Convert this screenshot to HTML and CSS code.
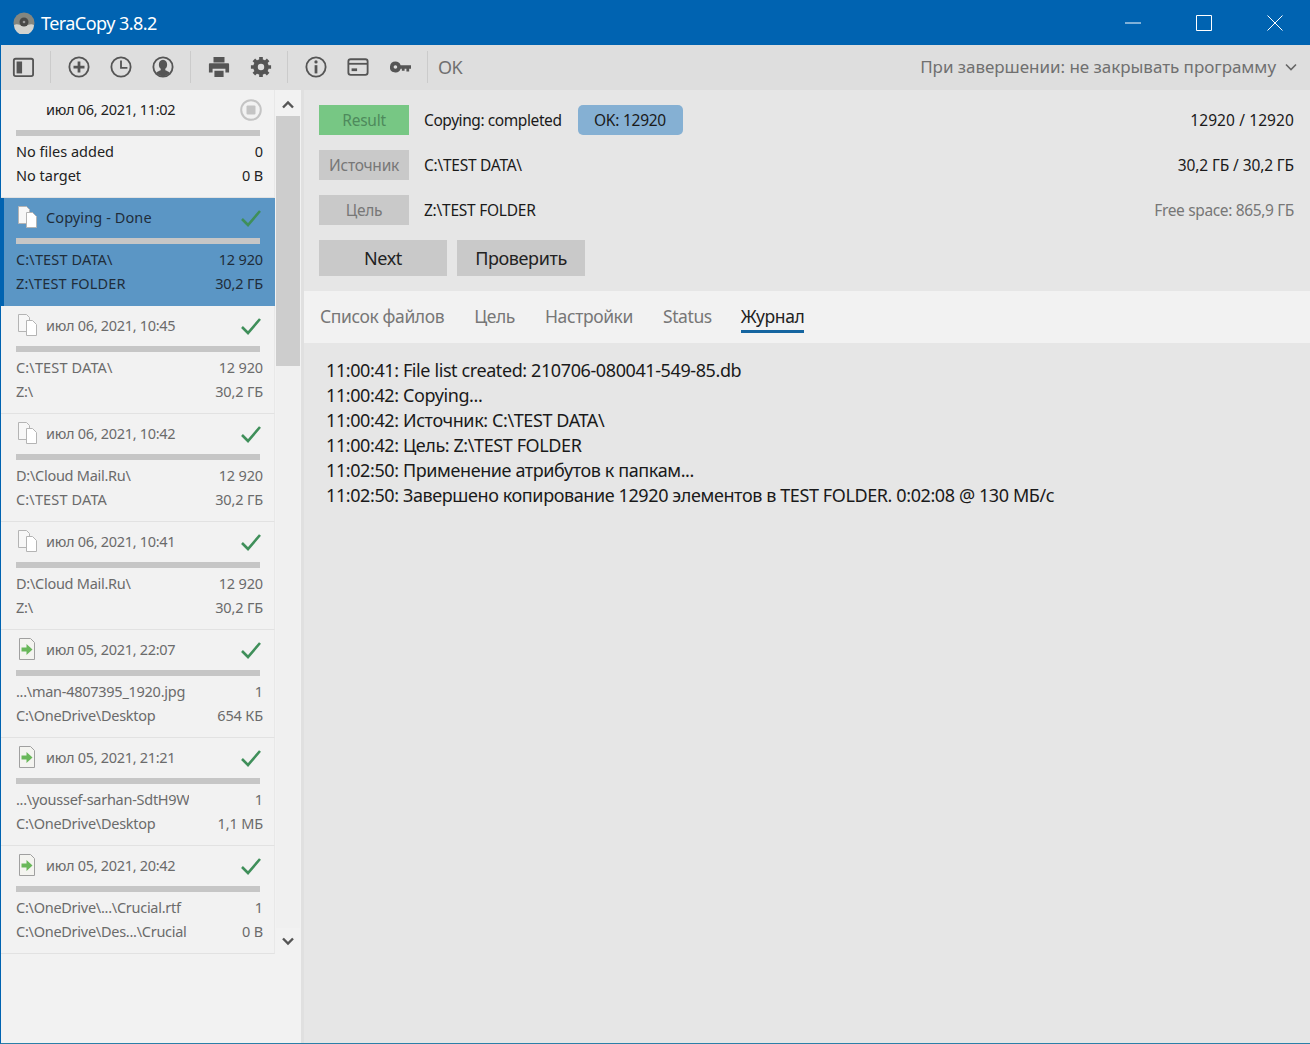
FILE: index.html
```html
<!DOCTYPE html>
<html lang="en">
<head>
  <meta charset="UTF-8">
  <title>TeraCopy 3.8.2</title>
  <link rel="stylesheet" href="styles.css">
</head>
<body>
  <svg class="defs" width="0" height="0">
    <symbol id="check" viewBox="0 0 22 20"><path d="M2 11l6 6L20 3" fill="none" stroke="#3f8f5a" stroke-width="2.6"/></symbol>
    <symbol id="files" viewBox="0 0 22 24"><path d="M2.500 1.500h8l3 3v14h-11z" fill="#f7f7f7" stroke="#b4b4b4"/><path d="M10.500 7.500h6l4 4v11h-10z" fill="#fff" stroke="#b4b4b4"/></symbol>
    <symbol id="file" viewBox="0 0 22 24"><path d="M3.500 1.500h11l4 4v17h-15z" fill="#f4f4f0" stroke="#a0a0a0"/><path d="M5.500 10.500h5V7l6 5.500-6 5.500v-3.500h-5z" fill="#69b85a"/></symbol>
  </svg>
  <div class="window">
    <header class="titlebar">
      <svg class="logo" width="22" height="22" viewBox="0 0 22 22"><circle cx="11" cy="11" r="10.500" fill="#84867f"/><path d="M1 13a10 10 0 0 0 20 0c-4-2-6 1-10 1s-6-3-10-1z" fill="#d2d3cf"/><circle cx="11" cy="10" r="4.500" fill="#4a4a48"/><circle cx="11" cy="10" r="1.300" fill="#999"/></svg>
      <span class="title">TeraCopy 3.8.2</span>
      <div class="winbtns">
        <svg width="16" height="16" viewBox="0 0 16 16"><path d="M0 8h16" stroke="#fff"/></svg>
        <svg width="16" height="16" viewBox="0 0 16 16"><path d="M.5.500h15v15H.5z" fill="none" stroke="#fff"/></svg>
        <svg width="16" height="16" viewBox="0 0 16 16"><path d="M.5.500l15 15M15.500.500l-15 15" stroke="#fff"/></svg>
      </div>
    </header>

    <div class="toolbar">
      <div class="toolgroup first">
        <svg class="ico" viewBox="0 0 24 24"><rect x="2" y="3" width="21" height="19" rx="2" fill="none" stroke="#555" stroke-width="2"/><rect x="5" y="6" width="6" height="13" fill="#555"/></svg>
      </div>
      <div class="toolgroup">
        <svg class="ico" viewBox="0 0 24 24"><circle cx="12" cy="12" r="10.500" fill="none" stroke="#555" stroke-width="2"/><path d="M12 6v12M6 12h12" stroke="#555" stroke-width="3"/></svg>
        <svg class="ico" viewBox="0 0 24 24"><circle cx="12" cy="12" r="10.500" fill="none" stroke="#555" stroke-width="2"/><path d="M12 5v8h7" fill="none" stroke="#555" stroke-width="2"/></svg>
        <svg class="ico" viewBox="0 0 24 24"><circle cx="12" cy="12" r="10.500" fill="none" stroke="#555" stroke-width="2"/><path d="M12 4c3 0 4.500 2.500 4.500 5.500 0 2-.8 3.500-2 4.500v1.500c2 .8 4 1.500 5 3a10 10 0 0 1-15 0c1-1.500 3-2.200 5-3V14c-1.200-1-2-2.500-2-4.500C7.500 6.500 9 4 12 4z" fill="#555"/></svg>
      </div>
      <div class="toolgroup narrow">
        <svg class="ico" viewBox="0 0 24 24"><path d="M6 1h12v6H6zM2 8h20a1 1 0 0 1 1 1v9h-4v-4H5v4H1V9a1 1 0 0 1 1-1zM7 16h10v7H7z" fill="#555"/></svg>
        <svg class="ico" viewBox="0 0 24 24"><path d="M12 3.500a8.500 8.500 0 1 0 0 17 8.500 8.500 0 0 0 0-17zm0 5a3.500 3.500 0 1 1 0 7 3.500 3.500 0 0 1 0-7z" fill="#555"/><path d="M12 1v5M12 18v5M1 12h5M18 12h5M4.200 4.200l3.500 3.500M16.300 16.300l3.500 3.500M19.800 4.200l-3.500 3.500M7.700 16.300l-3.500 3.500" stroke="#555" stroke-width="4"/></svg>
      </div>
      <div class="toolgroup">
        <svg class="ico" viewBox="0 0 24 24"><circle cx="12" cy="12" r="10.500" fill="none" stroke="#555" stroke-width="2"/><path d="M12 10v9" stroke="#555" stroke-width="3"/><circle cx="12" cy="6.500" r="1.800" fill="#555"/></svg>
        <svg class="ico" viewBox="0 0 24 24"><rect x="1.500" y="3.500" width="21" height="17" rx="2.500" fill="none" stroke="#555" stroke-width="2"/><path d="M2 8.500h20" stroke="#555" stroke-width="2"/><path d="M5 13.500h6v3H5z" fill="#555"/></svg>
        <svg class="ico" viewBox="0 0 24 24"><path d="M7 6a6 6 0 0 1 5.700 4H24v4h-2v3h-3v-3h-2v2h-3v-2h-1.300A6 6 0 1 1 7 6zm0 4a2 2 0 1 0 0 4 2 2 0 0 0 0-4z" fill="#555"/></svg>
      </div>
      <span class="ok-label">OK</span>
      <div class="finish">
        <span>При завершении: не закрывать программу</span>
        <svg width="12" height="8" viewBox="0 0 12 8"><path d="M1 1.500l5 5 5-5" fill="none" stroke="#666" stroke-width="1.600"/></svg>
      </div>
    </div>

    <div class="main">
      <aside class="sidebar">
        <div class="list">
          <div class="card">
            <div class="card-head">
              <span class="blank-icon"></span>
              <span class="date dark">июл 06, 2021, 11:02</span>
              <svg class="stop" width="22" height="22" viewBox="0 0 22 22"><circle cx="11" cy="11" r="9.800" fill="none" stroke="#c4c4c4" stroke-width="2"/><rect x="6.500" y="6.500" width="9" height="9" rx="1" fill="#c4c4c4"/></svg>
            </div>
            <div class="bar"></div>
            <div class="row dark"><span class="path">No files added</span><span>0</span></div>
            <div class="row dark"><span class="path">No target</span><span>0 B</span></div>
          </div>
          <div class="card active">
            <div class="card-head">
              <svg class="file-icon" viewBox="0 0 22 24"><use href="#files"/></svg>
              <span class="date">Copying - Done</span>
              <svg class="check" viewBox="0 0 22 20"><use href="#check"/></svg>
            </div>
            <div class="bar"></div>
            <div class="row"><span class="path caps">C:\TEST DATA\</span><span>12 920</span></div>
            <div class="row"><span class="path caps">Z:\TEST FOLDER</span><span>30,2 ГБ</span></div>
          </div>
          <div class="card">
            <div class="card-head">
              <svg class="file-icon" viewBox="0 0 22 24"><use href="#files"/></svg>
              <span class="date">июл 06, 2021, 10:45</span>
              <svg class="check" viewBox="0 0 22 20"><use href="#check"/></svg>
            </div>
            <div class="bar"></div>
            <div class="row"><span class="path caps">C:\TEST DATA\</span><span>12 920</span></div>
            <div class="row"><span class="path">Z:\</span><span>30,2 ГБ</span></div>
          </div>
          <div class="card">
            <div class="card-head">
              <svg class="file-icon" viewBox="0 0 22 24"><use href="#files"/></svg>
              <span class="date">июл 06, 2021, 10:42</span>
              <svg class="check" viewBox="0 0 22 20"><use href="#check"/></svg>
            </div>
            <div class="bar"></div>
            <div class="row"><span class="path">D:\Cloud Mail.Ru\</span><span>12 920</span></div>
            <div class="row"><span class="path caps">C:\TEST DATA</span><span>30,2 ГБ</span></div>
          </div>
          <div class="card">
            <div class="card-head">
              <svg class="file-icon" viewBox="0 0 22 24"><use href="#files"/></svg>
              <span class="date">июл 06, 2021, 10:41</span>
              <svg class="check" viewBox="0 0 22 20"><use href="#check"/></svg>
            </div>
            <div class="bar"></div>
            <div class="row"><span class="path">D:\Cloud Mail.Ru\</span><span>12 920</span></div>
            <div class="row"><span class="path">Z:\</span><span>30,2 ГБ</span></div>
          </div>
          <div class="card">
            <div class="card-head">
              <svg class="file-icon" viewBox="0 0 22 24"><use href="#file"/></svg>
              <span class="date">июл 05, 2021, 22:07</span>
              <svg class="check" viewBox="0 0 22 20"><use href="#check"/></svg>
            </div>
            <div class="bar"></div>
            <div class="row"><span class="path">...\man-4807395_1920.jpg</span><span>1</span></div>
            <div class="row"><span class="path">C:\OneDrive\Desktop</span><span>654 КБ</span></div>
          </div>
          <div class="card">
            <div class="card-head">
              <svg class="file-icon" viewBox="0 0 22 24"><use href="#file"/></svg>
              <span class="date">июл 05, 2021, 21:21</span>
              <svg class="check" viewBox="0 0 22 20"><use href="#check"/></svg>
            </div>
            <div class="bar"></div>
            <div class="row"><span class="path clip">...\youssef-sarhan-SdtH9W</span><span>1</span></div>
            <div class="row"><span class="path">C:\OneDrive\Desktop</span><span>1,1 МБ</span></div>
          </div>
          <div class="card">
            <div class="card-head">
              <svg class="file-icon" viewBox="0 0 22 24"><use href="#file"/></svg>
              <span class="date">июл 05, 2021, 20:42</span>
              <svg class="check" viewBox="0 0 22 20"><use href="#check"/></svg>
            </div>
            <div class="bar"></div>
            <div class="row"><span class="path">C:\OneDrive\...\Crucial.rtf</span><span>1</span></div>
            <div class="row"><span class="path">C:\OneDrive\Des...\Crucial</span><span>0 B</span></div>
          </div>
        </div>
        <div class="scrollbar">
          <svg width="14" height="10" viewBox="0 0 14 10"><path d="M2 7.500l5-5 5 5" fill="none" stroke="#555" stroke-width="2.400"/></svg>
          <div class="thumb"></div>
          <div class="track"></div>
          <svg width="14" height="10" viewBox="0 0 14 10"><path d="M2 2.500l5 5 5-5" fill="none" stroke="#555" stroke-width="2.400"/></svg>
        </div>
      </aside>

      <main class="content">
        <section class="summary">
          <div class="info">
            <span class="tag green">Result</span>
            <span class="val status">Copying: completed</span>
            <span class="pill">OK: 12920</span>
            <span class="right">12920 / 12920</span>
          </div>
          <div class="info">
            <span class="tag">Источник</span>
            <span class="val">C:\TEST DATA\</span>
            <span class="right size">30,2 ГБ / 30,2 ГБ</span>
          </div>
          <div class="info">
            <span class="tag">Цель</span>
            <span class="val">Z:\TEST FOLDER</span>
            <span class="right muted">Free space: 865,9 ГБ</span>
          </div>
          <div class="actions">
            <button class="btn">Next</button>
            <button class="btn">Проверить</button>
          </div>
        </section>
        <nav class="tabs">
          <span class="tab">Список файлов</span>
          <span class="tab">Цель</span>
          <span class="tab">Настройки</span>
          <span class="tab">Status</span>
          <span class="tab current">Журнал</span>
        </nav>
        <div class="log">
          <div>11:00:41: File list created: 210706-080041-549-85.db</div>
          <div>11:00:42: Copying...</div>
          <div>11:00:42: Источник: C:\TEST DATA\</div>
          <div>11:00:42: Цель: Z:\TEST FOLDER</div>
          <div>11:02:50: Применение атрибутов к папкам...</div>
          <div>11:02:50: Завершено копирование 12920 элементов в TEST FOLDER. 0:02:08 @ 130 МБ/с</div>
        </div>
      </main>
    </div>
  </div>
</body>
</html>
```

FILE: styles.css
```css
* {
  box-sizing: border-box;
}

body {
  margin: 0;
  font-family: "Noto Sans", sans-serif;
  background: #e6e6e6;
  overflow: hidden;
}

.defs {
  position: absolute;
}

.window {
  height: 1044px;
  display: flex;
  flex-direction: column;
  border-left: 1px solid #0063b1;
  border-bottom: 1px solid #2a7fa8;
}

.titlebar {
  height: 45px;
  margin-left: -1px;
  background: #0063b1;
  color: #fff;
  display: flex;
  align-items: center;
  padding-left: 13px;
  flex-shrink: 0;
}

.logo {
  margin-right: 6px;
}

.title {
  font-size: 18px;
  letter-spacing: -0.55px;
}

.winbtns {
  margin-left: auto;
  display: flex;
  gap: 55px;
  padding-right: 27px;
}

.toolbar {
  height: 45px;
  padding-bottom: 1px;
  background: #dedede;
  display: flex;
  align-items: center;
  flex-shrink: 0;
  color: #707070;
}

.toolgroup {
  display: flex;
  align-items: center;
  gap: 20px;
  height: 32px;
  padding: 0 16px 0 17px;
  border-right: 1px solid #cbcbcb;
}

.toolgroup.first {
  padding: 0 16px 0 11px;
}

.toolgroup.narrow {
  padding-right: 15px;
}

.ico {
  width: 22px;
  height: 22px;
}

.ok-label {
  margin-left: 10px;
  font-size: 18px;
  letter-spacing: -0.6px;
}

.finish {
  margin-left: auto;
  display: flex;
  align-items: center;
  gap: 9px;
  padding: 0 13px 1px 0;
  font-size: 17px;
  letter-spacing: -0.04px;
}

.main {
  flex: 1;
  display: flex;
  min-height: 0;
}

.sidebar {
  width: 300px;
  background: #f2f2f2;
  display: flex;
  flex-shrink: 0;
}

.list {
  width: 274px;
}

.card {
  height: 108px;
  padding: 0 11px 0 15px;
  border-bottom: 1px solid #e2e2e2;
  border-right: 1px solid #e8e8e8;
  color: #6b6b6b;
  font-size: 14.500px;
  letter-spacing: -0.15px;
}

.card.active {
  background: #5b96c5;
  border-left: 3px solid #0063b1;
  border-right: none;
  border-bottom: none;
  padding: 0 12px;
  color: #1f2d3a;
}

.card-head {
  height: 40px;
  padding-bottom: 2px;
  display: flex;
  align-items: center;
}

.blank-icon {
  width: 30px;
  flex-shrink: 0;
}

.file-icon {
  width: 22px;
  height: 24px;
  margin-right: 8px;
  flex-shrink: 0;
}

.date {
  flex: 1;
  letter-spacing: -0.3px;
}

.active .date {
  letter-spacing: 0.1px;
}

.dark {
  color: #222;
}

.check {
  width: 22px;
  height: 20px;
  margin: 2px 1px 0 0;
}

.stop {
  margin: 2px 1px 0 0;
}

.bar {
  width: 244px;
  height: 6px;
  background: #c6c6c6;
}

.card .bar + .row {
  margin-top: 3px;
}

.row {
  height: 24px;
  display: flex;
  align-items: center;
  justify-content: space-between;
}

.path {
  letter-spacing: -0.27px;
}

.dark .path {
  letter-spacing: 0;
}

.path.caps {
  letter-spacing: 0.15px;
}

.path.clip {
  width: 173px;
  overflow: hidden;
  white-space: nowrap;
}

.scrollbar {
  width: 26px;
  background: #f2f2f2;
  display: flex;
  flex-direction: column;
  align-items: center;
  padding: 0 1px 97px 1px;
}

.scrollbar svg {
  flex-shrink: 0;
  margin: 10px 0 6px;
}

.thumb {
  width: 100%;
  height: 250px;
  background: #cdcdcd;
}

.track {
  flex: 1;
  width: 100%;
  background: #f0f0f0;
}

.scrollbar svg:last-child {
  margin: 8px 0 0;
}

.content {
  flex: 1;
  display: flex;
  flex-direction: column;
  min-width: 0;
  border-left: 3px solid #e0e0e0;
}

.summary {
  height: 200px;
  padding: 15px 16px 0 15px;
  font-size: 15.500px;
  letter-spacing: -0.25px;
  flex-shrink: 0;
}

.info {
  height: 30px;
  margin-bottom: 15px;
  display: flex;
  align-items: center;
  color: #1a1a1a;
}

.val {
  padding-bottom: 1px;
}

.val.status {
  letter-spacing: -0.42px;
}

.tag {
  width: 90px;
  height: 30px;
  margin-right: 15px;
  background: #c9c9c9;
  color: #777;
  display: flex;
  align-items: center;
  justify-content: center;
}

.tag.green {
  background: #77c784;
  color: #4e8a5c;
}

.pill {
  margin-left: 16px;
  width: 105px;
  height: 30px;
  background: #85b0d3;
  border-radius: 5px;
  display: flex;
  align-items: center;
  justify-content: center;
}

.right {
  margin-left: auto;
  letter-spacing: 0.1px;
  padding-bottom: 1px;
}

.right.size {
  letter-spacing: -0.12px;
}

.right.muted {
  color: #777;
  letter-spacing: -0.35px;
}

.actions {
  display: flex;
  gap: 10px;
}

.btn {
  width: 128px;
  height: 36px;
  border: none;
  background: #c9c9c9;
  color: #222;
  font-family: inherit;
  font-size: 18px;
  letter-spacing: -0.4px;
  padding: 0;
}

.tabs {
  height: 52px;
  margin-top: 1px;
  padding: 0 0 2px 16px;
  background: #f2f2f2;
  display: flex;
  align-items: center;
  gap: 30px;
  flex-shrink: 0;
  font-size: 17.500px;
  letter-spacing: -0.4px;
  color: #777;
}

.tab.current {
  color: #222;
  border-bottom: 3px solid #1565a0;
  margin: 5px 0 0 -1px;
  padding-bottom: 2px;
  line-height: 24px;
}

.log {
  padding: 15px 22px;
  font-size: 18px;
  line-height: 25px;
  letter-spacing: -0.4px;
  color: #1a1a1a;
}
```
